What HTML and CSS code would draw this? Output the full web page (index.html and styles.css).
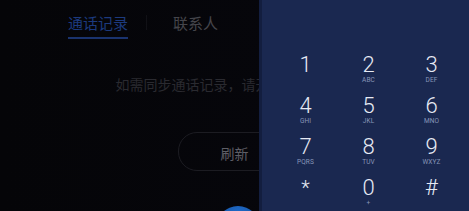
FILE: index.html
```html
<!DOCTYPE html>
<html lang="zh">
<head>
<meta charset="utf-8">
<link rel="stylesheet" href="styles.css">
</head>
<body>
<div class="screen">
  <div class="page">
    <div class="tabs">
      <div class="tab active">通话记录</div>
      <div class="sep"></div>
      <div class="tab">联系人</div>
    </div>
    <p class="msg">如需同步通话记录，请开启通讯录权限</p>
    <div class="btn">刷新</div>
    <div class="fab"></div>
  </div>
  <div class="dialpad">
    <div class="key"><span class="d">1</span></div>
    <div class="key"><span class="d">2</span><span class="l">ABC</span></div>
    <div class="key"><span class="d">3</span><span class="l">DEF</span></div>
    <div class="key"><span class="d">4</span><span class="l">GHI</span></div>
    <div class="key"><span class="d">5</span><span class="l">JKL</span></div>
    <div class="key"><span class="d">6</span><span class="l">MNO</span></div>
    <div class="key"><span class="d">7</span><span class="l">PQRS</span></div>
    <div class="key"><span class="d">8</span><span class="l">TUV</span></div>
    <div class="key"><span class="d">9</span><span class="l">WXYZ</span></div>
    <div class="key"><span class="d star">*</span></div>
    <div class="key"><span class="d">0</span><span class="l">+</span></div>
    <div class="key"><span class="d">#</span></div>
  </div>
</div>
</body>
</html>
```

FILE: styles.css
```css
html, body {
  margin: 0;
  padding: 0;
  background: #050509;
}
.screen {
  position: relative;
  width: 469px;
  height: 211px;
  overflow: hidden;
  background: linear-gradient(90deg, #050508 0%, #06060b 60%, #080a14 100%);
  font-family: "Noto Sans CJK SC", "Noto Sans", sans-serif;
}
.page {
  display: flex;
  flex-direction: column;
  align-items: center;
}
.tabs {
  align-self: flex-start;
  display: flex;
  align-items: flex-start;
  padding: 15px 0 0 68px;
}
.tab {
  font-size: 15px;
  line-height: 15px;
  color: #45454b;
  padding-bottom: 7px;
}
.tab.active {
  color: #1c3a7e;
  border-bottom: 2px solid #1a336e;
}
.sep {
  width: 1px;
  height: 15px;
  background: #111116;
  margin: 0 26px 0 18px;
}
.msg {
  margin: 38px 0 0 0;
  font-size: 14px;
  line-height: 15px;
  color: #2a2a30;
  white-space: nowrap;
}
.btn {
  margin-top: 40px;
  width: 112px;
  height: 35px;
  border: 1px solid #1c1c22;
  border-radius: 19px;
  display: flex;
  align-items: center;
  justify-content: center;
  font-size: 14px;
  color: #5e5e66;
  padding-top: 2px;
  box-sizing: content-box;
}
.fab {
  margin-top: 35px;
  margin-left: 6px;
  width: 44px;
  height: 44px;
  border-radius: 50%;
  background: radial-gradient(circle at 50% 20%, #1f6ccc 0%, #164f9a 60%, #0f3a75 100%);
  flex: none;
}
.dialpad {
  position: absolute;
  top: 0;
  right: 0;
  width: 210px;
  height: 211px;
  box-sizing: border-box;
  border-left: 3px solid #131e3f;
  background: #1a2850;
  padding: 54px 0 0 12px;
  display: grid;
  grid-template-columns: repeat(3, 63px);
  grid-auto-rows: 41px;
  align-content: start;
}
.key {
  display: flex;
  flex-direction: column;
  align-items: center;
  font-family: Roboto, "Noto Sans", sans-serif;
}
.d {
  font-size: 22px;
  line-height: 22px;
  font-weight: 300;
  color: #e6eaf4;
}
.d.star {
  font-size: 20px;
}
.l {
  font-size: 6.5px;
  line-height: 8px;
  height: 8px;
  color: #8896b8;
  letter-spacing: 0.1px;
}
```
